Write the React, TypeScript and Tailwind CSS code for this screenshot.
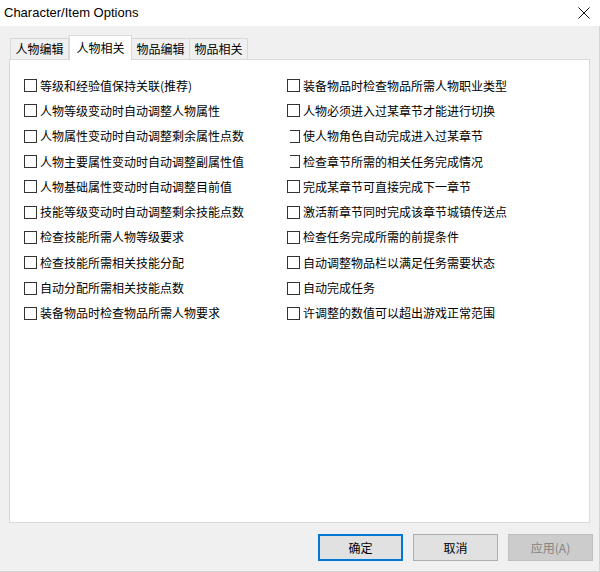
import React from "react";

const font = { fontFamily: '"Microsoft YaHei", "Noto Sans CJK SC", "Noto Sans", sans-serif' };

const leftItems = [
  "等级和经验值保持关联(推荐)",
  "人物等级变动时自动调整人物属性",
  "人物属性变动时自动调整剩余属性点数",
  "人物主要属性变动时自动调整副属性值",
  "人物基础属性变动时自动调整目前值",
  "技能等级变动时自动调整剩余技能点数",
  "检查技能所需人物等级要求",
  "检查技能所需相关技能分配",
  "自动分配所需相关技能点数",
  "装备物品时检查物品所需人物要求",
];

const rightItems: { label: string; clipped?: boolean }[] = [
  { label: "装备物品时检查物品所需人物职业类型" },
  { label: "人物必须进入过某章节才能进行切换" },
  { label: "使人物角色自动完成进入过某章节", clipped: true },
  { label: "检查章节所需的相关任务完成情况", clipped: true },
  { label: "完成某章节可直接完成下一章节" },
  { label: "激活新章节同时完成该章节城镇传送点" },
  { label: "检查任务完成所需的前提条件" },
  { label: "自动调整物品栏以满足任务需要状态" },
  { label: "自动完成任务" },
  { label: "许调整的数值可以超出游戏正常范围" },
];

function Check({ label, clipped }: { label: string; clipped?: boolean }) {
  return (
    <div className="flex h-[25.3px] items-center">
      {clipped ? (
        <span className="ml-[3px] box-border h-[13px] w-[10px] border border-l-0 border-[#333333] bg-white" />
      ) : (
        <span className="box-border h-[13px] w-[13px] border border-[#333333] bg-white" />
      )}
      <span className="ml-[3px] whitespace-nowrap text-[12px] leading-none text-black">{label}</span>
    </div>
  );
}

export default function App() {
  return (
    <div className="flex h-[572px] w-[600px] flex-col bg-white" style={font}>
      {/* title bar */}
      <div className="flex h-[26px] items-center justify-between bg-white pl-[4px] pr-[8px]">
        <span className="text-[13px] text-black" style={{ fontFamily: '"Segoe UI", "Liberation Sans", sans-serif' }}>
          Character/Item Options
        </span>
        <svg width="12" height="12" viewBox="0 0 12 12" className="mr-[2px]">
          <path d="M0.5 0.5 L11.5 11.5 M11.5 0.5 L0.5 11.5" stroke="#111" strokeWidth="1" />
        </svg>
      </div>

      <div className="flex flex-1 flex-col border-b border-r border-[#d4d4d4] bg-[#f0f0f0] pl-[9px] pr-[9px] pt-[9px]">
        {/* tabs */}
        <div className="relative z-10 flex h-[24px] items-end pl-px">
          <div className="flex h-[21px] w-[59px] items-center justify-center border border-b-0 border-[#d9d9d9] bg-[#f0f0f0] text-[12px]">
            人物编辑
          </div>
          <div className="-mb-px flex h-[25px] w-[63px] items-center justify-center border border-b-0 border-[#d9d9d9] bg-white text-[12px]">
            人物相关
          </div>
          <div className="flex h-[21px] w-[58px] items-center justify-center border border-b-0 border-l-0 border-[#d9d9d9] bg-[#f0f0f0] text-[12px]">
            物品编辑
          </div>
          <div className="flex h-[21px] w-[58px] items-center justify-center border border-b-0 border-l-0 border-[#d9d9d9] bg-[#f0f0f0] text-[12px]">
            物品相关
          </div>
        </div>

        {/* panel */}
        <div className="box-border grid h-[464px] grid-cols-[263px_1fr] border border-[#d9d9d9] bg-white pl-[14px] pt-[13px]">
          <div className="flex flex-col">
            {leftItems.map((l) => (
              <Check key={l} label={l} />
            ))}
          </div>
          <div className="flex flex-col">
            {rightItems.map((r) => (
              <Check key={r.label} label={r.label} clipped={r.clipped} />
            ))}
          </div>
        </div>

        {/* buttons */}
        <div className="-mr-[3px] mt-[11px] flex justify-end gap-[10px]">
          <button className="box-border h-[27px] w-[85px] border-2 border-[#0078d7] bg-[#e1e1e1] text-[12px] text-black">
            确定
          </button>
          <button className="box-border h-[27px] w-[85px] border border-[#adadad] bg-[#e1e1e1] text-[12px] text-black">
            取消
          </button>
          <button className="box-border h-[27px] w-[85px] border border-[#bfbfbf] bg-[#cccccc] text-[12px] text-[#838383]">
            应用(A)
          </button>
        </div>
      </div>
    </div>
  );
}
